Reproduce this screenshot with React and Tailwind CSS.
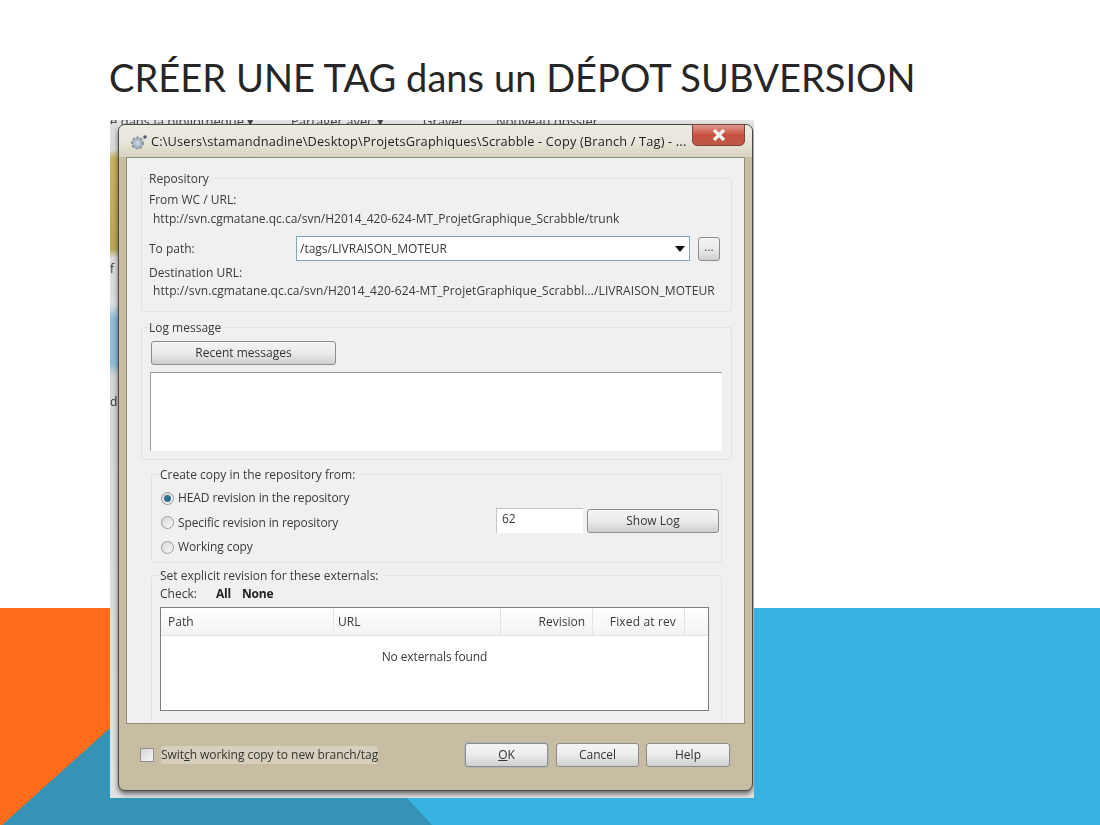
const ui = { fontFamily: '"Open Sans","Noto Sans",sans-serif' };

function Btn({ children, className = "" }) {
  return (
    <div className={`flex items-center justify-center rounded-[3px] border border-[#8c8c8c] bg-gradient-to-b from-[#f4f4f4] via-[#ebebeb] to-[#cfcfcf] text-[12px] text-[#333] ${className}`}>
      {children}
    </div>
  );
}

function Group({ label, className = "", labelClass = "left-[7px]", children }) {
  return (
    <div className={`relative rounded-[2px] border border-[#e2e3e4] ${className}`}>
      <span className={`absolute -top-[8px] bg-[#f0f0f0] pr-1 text-[12px] leading-[16px] ${labelClass}`}>{label}</span>
      {children}
    </div>
  );
}

function Radio({ on, label }) {
  return (
    <div className="flex h-[24.5px] items-center gap-[3px]">
      <span className="flex h-[13px] w-[13px] items-center justify-center rounded-full border border-[#9a9a9a] bg-gradient-to-br from-[#d8d8d8] to-[#f8f8f8]">
        {on && <span className="h-[7px] w-[7px] rounded-full bg-[#2f6f92]" />}
      </span>
      <span className="ml-[1px] text-[12px] tracking-[-0.1px]">{label}</span>
    </div>
  );
}

export default function App() {
  return (
    <div className="relative h-[825px] w-[1100px] overflow-hidden bg-white" style={ui}>
      <svg className="absolute inset-0" width="1100" height="825" viewBox="0 0 1100 825">
        <rect x="0" y="608" width="1100" height="217" fill="#38b2e0" />
        <rect x="0" y="608" width="300" height="217" fill="#ff6c1a" />
        <polygon points="130,710 2,825 432,825 407,798 130,798" fill="#3593b5" />
      </svg>

      <h1 className="relative pl-[109px] pt-[51px] text-[38px] font-normal leading-[52px] tracking-[0.05px] text-[#262626]" style={{ fontFamily: 'Lato,"Noto Sans",sans-serif' }}>
        CRÉER UNE TAG dans un DÉPOT SUBVERSION
      </h1>

      {/* photographed window */}
      <div className="relative ml-[110px] mt-[17px] h-[678px] w-[644px] overflow-hidden bg-[#e4e4e4] blur-[0.35px]">
        <div className="absolute left-0 top-[-8px] flex whitespace-nowrap text-[13px] text-[#444]">
          <span className="w-[181px]">e dans la bibliothèque ▾</span>
          <span className="w-[132px]">Partager avec ▾</span>
          <span className="w-[73px]">Graver</span>
          <span>Nouveau dossier</span>
        </div>
        <div className="absolute left-0 top-[4px] h-[674px] w-[8px] bg-[linear-gradient(to_bottom,#dcdcdc_0,#dcdcdc_26px,#c9b25f_34px,#b9a85a_125px,#dedede_134px,#dcdcdc_170px,#dde2e5_180px,#8fbcd8_195px,#8fbcd8_240px,#d5d5d5_252px,#e2e2e2_100%)]" />
        <span className="absolute left-0 top-[140px] text-[12px] text-[#333]">f</span>
        <span className="absolute left-0 top-[273px] text-[12px] text-[#333]">d</span>

        <div className="relative ml-[8px] mt-[4px] flex h-[667px] w-[635px] flex-col rounded-[7px] border-[1.5px] border-[#4a4a4a] bg-[#c6bda3] shadow-[0_3px_5px_rgba(0,0,0,0.55)]">
          {/* title bar */}
          <div className="relative flex h-[32px] shrink-0 items-center pl-[10px] pt-[1px] text-[12.8px] tracking-[0.16px] text-[#222]">
            <div className="absolute inset-0 rounded-t-[6px] bg-gradient-to-b from-[#ecebe4] via-[#e8e6dc] to-[#d8d2be]" />
            <svg className="relative" width="20" height="18" viewBox="0 0 20 18">
              <circle cx="8.5" cy="10" r="5.5" fill="#a9b6c4" stroke="#8b98a3" strokeWidth="2" strokeDasharray="2.5 1.5" />
              <circle cx="8.5" cy="10" r="2.5" fill="#c9d2dc" />
              <circle cx="16" cy="4" r="1.8" fill="#555f66" />
            </svg>
            <span className="relative ml-[2px] whitespace-nowrap">C:\Users\stamandnadine\Desktop\ProjetsGraphiques\Scrabble - Copy (Branch / Tag) - ...</span>
            <div className="absolute right-[7px] top-[-1px] flex h-[22px] w-[53px] items-center justify-center rounded-b-[5px] border border-[#7d4238] bg-gradient-to-b from-[#dc9a90] via-[#c9503f] to-[#bb5a45]">
              <svg width="16" height="12" viewBox="0 0 16 12">
                <path d="M3 1 L13 11 M13 1 L3 11" stroke="#f1eeee" strokeWidth="3.4" />
              </svg>
            </div>
          </div>

          {/* panel */}
          <div className="mx-[7px] flex h-[567px] shrink-0 flex-col border border-[#8f8a78] bg-[#f0f0f0] pl-[14px] pr-[12px] pt-[20px] text-[#3a3a3a]">
            <Group label="Repository" className="h-[134px] shrink-0">
              <div className="flex h-full flex-col pl-[7px] pr-[11px] pt-[12px] text-[12px]">
                <div className="h-[18px] leading-[18px]">From WC / URL:</div>
                <div className="ml-[4px] h-[19px] whitespace-nowrap leading-[20px]">http://svn.cgmatane.qc.ca/svn/H2014_420-624-MT_ProjetGraphique_Scrabble/trunk</div>
                <div className="mt-[8px] flex items-center">
                  <span className="w-[147px]">To path:</span>
                  <div className="flex h-[25px] w-[394px] items-center justify-between border border-[#7fa6bd] bg-white pl-[3px] pr-[4px]">
                    <span>/tags/LIVRAISON_MOTEUR</span>
                    <svg width="10" height="6" viewBox="0 0 10 6"><path d="M0 0 H10 L5 6 Z" fill="#111" /></svg>
                  </div>
                  <Btn className="ml-[8px] h-[24px] w-[22px] pb-[4px] text-[#555]">...</Btn>
                </div>
                <div className="mt-[3px] h-[18px] leading-[18px]">Destination URL:</div>
                <div className="ml-[4px] h-[18px] whitespace-nowrap leading-[18px] tracking-[0.09px]">http://svn.cgmatane.qc.ca/svn/H2014_420-624-MT_ProjetGraphique_Scrabbl.../LIVRAISON_MOTEUR</div>
              </div>
            </Group>

            <Group label="Log message" className="mt-[15px] h-[133px] shrink-0">
              <div className="flex flex-col pl-[8px] pr-[9px] pt-[13px]">
                <Btn className="ml-[1px] h-[24px] w-[185px]">Recent messages</Btn>
                <div className="mt-[7px] h-[79px] border-l border-t border-[#9c9c9c] bg-white" />
              </div>
            </Group>

            <Group label="Create copy in the repository from:" labelClass="left-[8px]" className="ml-[10px] mt-[14px] h-[89px] w-[571px] shrink-0">
              <div className="flex pl-[9px] pr-[2px] pt-[11px]">
                <div className="flex w-[337px] flex-col">
                  <Radio on label="HEAD revision in the repository" />
                  <Radio label="Specific revision in repository" />
                  <Radio label="Working copy" />
                </div>
                <div className="mt-[22px] flex h-[25px] items-center">
                  <div className="flex h-[25px] w-[87px] items-center border-l border-t border-[#c4c4c4] bg-white pb-[4px] pl-[5px] text-[12px]">62</div>
                  <Btn className="ml-[4px] h-[24px] w-[132px]">Show Log</Btn>
                </div>
              </div>
            </Group>

            <Group label="Set explicit revision for these externals:" labelClass="left-[8px]" className="ml-[10px] mt-[12px] min-h-0 w-[571px] flex-1 border-b-0">
              <div className="flex flex-col pl-[8px] pr-[12px] pt-[9px] text-[12px]">
                <div className="flex h-[18px] items-center">
                  <span className="w-[56px]">Check:</span>
                  <span className="w-[26px] font-bold tracking-[-0.2px] text-[#222]">All</span>
                  <span className="font-bold tracking-[-0.2px] text-[#222]">None</span>
                </div>
                <div className="mt-[4px] flex h-[104px] flex-col border border-[#7d7d7d] bg-white">
                  <div className="flex h-[28px] shrink-0 items-center border-b border-[#dfe2e5] bg-gradient-to-b from-white to-[#f1f3f5]">
                    <span className="flex h-full w-[173px] items-center border-r border-[#e2e4e6] pl-[7px] pt-[1px]">Path</span>
                    <span className="flex h-full w-[167px] items-center border-r border-[#e2e4e6] pl-[4px] pt-[1px]">URL</span>
                    <span className="flex h-full w-[92px] items-center justify-end border-r border-[#e2e4e6] pr-[7px] pt-[1px]">Revision</span>
                    <span className="flex h-full w-[92px] items-center justify-end border-r border-[#e2e4e6] pr-[8px] pt-[1px] tracking-[0.15px]">Fixed at rev</span>
                  </div>
                  <div className="pt-[12px] text-center tracking-[-0.1px]">No externals found</div>
                </div>
              </div>
            </Group>
          </div>

          {/* footer */}
          <div className="flex flex-1 items-center pb-[5px] pl-[21px] pr-[22px] text-[12px] text-[#333]">
            <span className="h-[14px] w-[14px] border border-[#8f8f8f] bg-gradient-to-br from-[#d7d7d7] to-[#f4f4f4]" />
            <span className="ml-[7px] rounded-[3px] bg-[#d6cfbc] tracking-[-0.05px]">Swit<u>c</u>h working copy to new branch/tag</span>
            <Btn className="ml-auto h-[24px] w-[83px] border-[#4f93b8] from-[#d8f4fd] via-[#d8eaf1] to-[#b6d0dc] shadow-[0_0_2px_#5fa9cf]"><u>O</u>K</Btn>
            <Btn className="ml-[8px] h-[24px] w-[83px]">Cancel</Btn>
            <Btn className="ml-[7px] h-[24px] w-[84px]">Help</Btn>
          </div>
        </div>
      </div>
    </div>
  );
}
